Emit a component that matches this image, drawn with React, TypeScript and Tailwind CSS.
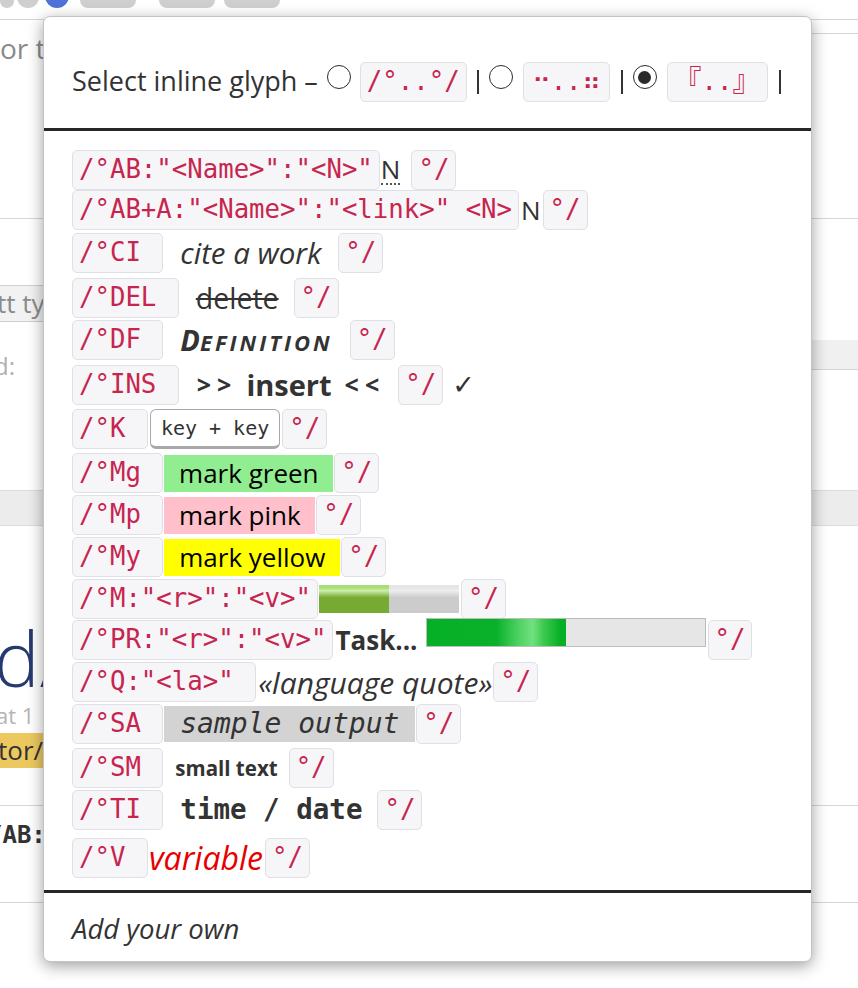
import React from "react";

const MONO = "font-['DejaVu_Sans_Mono','Noto_Sans_CJK_JP',monospace]";

function C({ children, className = "" }: { children: React.ReactNode; className?: string }) {
  return (
    <code
      className={`inline-flex shrink-0 items-center h-[40px] px-[6px] rounded-[5px] border border-[#dfdfe6] bg-[#f6f6f9] text-[#c7254e] ${MONO} text-[25.7px] whitespace-pre leading-none ${className}`}
    >
      {children}
    </code>
  );
}

function Radio({ on }: { on?: boolean }) {
  return (
    <span className="inline-flex shrink-0 w-[24px] h-[24px] mb-[9px] rounded-full border-[1.5px] border-[#2b2b2b] items-center justify-center bg-white">
      {on && <span className="w-[13px] h-[13px] rounded-full bg-[#2b2b2b]" />}
    </span>
  );
}

function Row({ children, className = "" }: { children: React.ReactNode; className?: string }) {
  return <div className={`flex items-center h-[40px] whitespace-nowrap ${className}`}>{children}</div>;
}

function Background() {
  return (
    <div className="flex flex-col w-[858px] font-['Open_Sans',sans-serif]">
      <div className="h-[8px] overflow-hidden">
        <div className="flex items-end gap-[3px] -mt-[22px] h-[30px]">
          <span className="w-[14px] h-[30px] rounded-b-full bg-[#cfcfcf]" />
          <span className="w-[22px] h-[30px] rounded-full bg-[#cfcfcf]" />
          <span className="w-[24px] h-[30px] rounded-full bg-[#4f72d9] ml-[3px]" />
          <span className="w-[56px] h-[30px] rounded-[8px] bg-[#cfcfcf] ml-[8px]" />
          <span className="w-[56px] h-[30px] rounded-[8px] bg-[#cfcfcf] ml-[20px]" />
          <span className="w-[56px] h-[30px] rounded-[8px] bg-[#cfcfcf] ml-[6px]" />
        </div>
      </div>
      <div className="h-[11px]" />
      <div className="h-[1px] bg-[#d6d6d6]" />
      <div className="h-[13px]" />
      <div className="h-[1px] bg-[#d6d6d6] ml-[800px]" />
      <div className="h-[28px] flex items-center text-[28px] text-[#8a8a8a] leading-none">or type here</div>
      <div className="h-[156px]" />
      <div className="h-[1px] bg-[#d6d6d6]" />
      <div className="h-[66px]" />
      <div className="h-[37px] w-[120px] -ml-[24px] bg-[#f2f2f2] border border-[#cfcfcf] flex items-center pl-[20px] text-[26px] text-[#8a8a8a]">
        tt ty
      </div>
      <div className="h-[18px]" />
      <div className="h-[44px] flex items-start justify-between">
        <span className="mt-[12px] text-[24px] leading-[28px] text-[#b0b0b0] -ml-[12px]">ld:</span>
        <span className="w-[58px] h-[30px] bg-[#f0f0f0] border-b border-[#d6d6d6]" />
      </div>
      <div className="h-[106px]" />
      <div className="h-[36px] bg-[#ececec] border-t border-b border-[#dcdcdc]" />
      <div className="h-[99px]" />
      <div className="h-[66px] flex items-center text-[76px] text-[#253a6e] font-light leading-none -ml-[46px] whitespace-nowrap">ad/</div>
      <div className="h-[10px]" />
      <div className="h-[28px] flex items-center text-[22px] text-[#b5b5b5] -ml-[4px]">at 1</div>
      <div className="h-[4px]" />
      <div className="h-[35px] w-[60px] bg-[#ecc960] flex items-center text-[26px] text-[#333] -ml-[2px]">tor/l</div>
      <div className="h-[38px] border-b border-[#d6d6d6]" />
      <div className={`h-[58px] flex items-center text-[24px] font-bold text-[#333] ${MONO} -ml-[12px]`}>/AB:</div>
      <div className="h-[39px] border-b border-[#d6d6d6]" />
    </div>
  );
}

export default function App() {
  return (
    <div className="relative w-[858px] h-[988px] overflow-hidden bg-white">
      <Background />
      <div className="absolute left-[43px] top-[16px] w-[769px] h-[946px] flex flex-col bg-white border border-[#c4c4c4] rounded-[7px] shadow-[0_4px_16px_rgba(0,0,0,0.38)] font-['Open_Sans',sans-serif] text-[26px] text-[#333] overflow-hidden">
        {/* header */}
        <div className="h-[111px] pt-[18px] pl-[28px] flex items-center whitespace-nowrap">
          <span className="text-[27px]">Select inline glyph –</span>
          <span className="ml-[9px]" />
          <Radio />
          <C className="ml-[9px]">/°..°/</C>
          <span className="ml-[10px] w-[2px] h-[24px] bg-[#333]" />
          <span className="ml-[10px]" />
          <Radio />
          <C className="ml-[10px] px-[8px]">⠒..⠶</C>
          <span className="ml-[11px] w-[2px] h-[24px] bg-[#333]" />
          <span className="ml-[10px]" />
          <Radio on />
          <C className="ml-[10px] px-[5px]">
            <span className="text-[28px]">『</span>..<span className="text-[28px]">』</span>
          </C>
          <span className="ml-[11px] w-[2px] h-[24px] bg-[#333]" />
        </div>
        <div className="h-[3px] bg-[#262626]" />

        {/* rows */}
        <div className="pt-[19px] pb-[12px] pl-[28px] flex flex-col">
          <Row>
            <C>{'/°AB:"<Name>":"<N>"'}</C>
            <abbr className="ml-[1px] no-underline border-b-[2px] border-dotted border-[#555] leading-[28px]">N</abbr>
            <C className="ml-[11px]">°/</C>
          </Row>
          <Row>
            <C>{'/°AB+A:"<Name>":"<link>" <N>'}</C>
            <span className="ml-[2px]">N</span>
            <C className="ml-[2px]">°/</C>
          </Row>
          <Row className="mt-[3px]">
            <C>{"/°CI "}</C>
            <cite className="ml-[17px] italic text-[29.5px]">cite a work</cite>
            <C className="ml-[17px]">°/</C>
          </Row>
          <Row className="mt-[5px]">
            <C>{"/°DEL "}</C>
            <del className="ml-[17px] line-through decoration-[2px] text-[28.5px]">delete</del>
            <C className="ml-[15px]">°/</C>
          </Row>
          <Row className="mt-[2px]">
            <C>{"/°DF "}</C>
            <dfn className="ml-[17px] italic font-bold flex items-baseline">
              <span className="text-[29px]">D</span>
              <span className="text-[22px] tracking-[3px]">EFINITION</span>
            </dfn>
            <C className="ml-[17px]">°/</C>
          </Row>
          <Row className="mt-[5px]">
            <C>{"/°INS "}</C>
            <ins className="ml-[18px] no-underline font-bold flex items-center">
              <span className="text-[25px] tracking-[6px]">&gt;&gt;</span>
              <span className="ml-[9px] text-[29px]">insert</span>
              <span className="ml-[13px] text-[25px] tracking-[6px]">&lt;&lt;</span>
            </ins>
            <C className="ml-[13px]">°/</C>
            <span className="ml-[9px] font-['DejaVu_Sans',sans-serif] text-[27px]">✓</span>
          </Row>
          <Row className="mt-[4px]">
            <C>{"/°K "}</C>
            <kbd className={`ml-[2px] h-[40px] px-[10px] inline-flex items-center rounded-[6px] border border-[#a8a8a8] border-b-[3px] bg-white text-[20px] text-[#333] ${MONO} whitespace-pre`}>
              key + key
            </kbd>
            <C className="ml-[2px]">°/</C>
          </Row>
          <Row className="mt-[4px]">
            <C>{"/°Mg "}</C>
            <mark className="ml-[1px] w-[169px] h-[37px] flex items-center justify-center bg-[#90ee90] text-black">mark green</mark>
            <C className="ml-[1px]">°/</C>
          </Row>
          <Row className="mt-[2px]">
            <C>{"/°Mp "}</C>
            <mark className="ml-[1px] w-[151px] h-[37px] flex items-center justify-center bg-[#ffc0cb] text-black">mark pink</mark>
            <C className="ml-[1px]">°/</C>
          </Row>
          <Row className="mt-[2px]">
            <C>{"/°My "}</C>
            <mark className="ml-[1px] w-[176px] h-[37px] flex items-center justify-center bg-[#ffff00] text-black">mark yellow</mark>
            <C className="ml-[1px]">°/</C>
          </Row>
          <Row className="mt-[2px]">
            <C>{'/°M:"<r>":"<v>"'}</C>
            <div className="ml-[1px] w-[140px] h-[28px] bg-[linear-gradient(#e6e6e6,#e6e6e6,#eeeeee_20%,#cccccc_45%,#cccccc_55%)]">
              <div className="w-[70px] h-full bg-[linear-gradient(#aadd77,#aadd77,#cceeaa_20%,#77aa33_45%,#77aa33_55%)]" />
            </div>
            <C className="ml-[2px]">°/</C>
          </Row>
          <Row className="mt-[1px]">
            <C>{'/°PR:"<r>":"<v>"'}</C>
            <span className="ml-[2px] font-bold">Task...</span>
            <div className="ml-[8px] mb-[16px] w-[280px] h-[29px] border border-[#bcbcbc] bg-[#e6e6e6]">
              <div className="w-[139px] h-full bg-[linear-gradient(90deg,#06b025_0%,#09b12a_50%,#4fd262_66%,#72e07f_76%,#3cc94f_84%,#06b025_96%)]" />
            </div>
            <C className="ml-[2px]">°/</C>
          </Row>
          <Row className="mt-[2px]">
            <C>{'/°Q:"<la>" '}</C>
            <q className="ml-[2px] italic text-[30px] before:content-['«'] after:content-['»']">language quote</q>
            <C className="ml-[1px]">°/</C>
          </Row>
          <Row className="mt-[2px]">
            <C>{"/°SA "}</C>
            <samp className={`ml-[1px] w-[251px] h-[36px] flex items-center justify-center bg-[#d3d3d3] italic text-[28px] ${MONO} text-[#333]`}>
              sample output
            </samp>
            <C className="ml-[1px]">°/</C>
          </Row>
          <Row className="mt-[4px]">
            <C>{"/°SM "}</C>
            <small className="ml-[12px] text-[20.5px] font-bold">small text</small>
            <C className="ml-[11px]">°/</C>
          </Row>
          <Row className="mt-[2px]">
            <C>{"/°TI "}</C>
            <time className={`ml-[17px] text-[27.5px] font-bold ${MONO} whitespace-pre`}>time / date</time>
            <C className="ml-[15px]">°/</C>
          </Row>
          <Row className="mt-[8px]">
            <C>{"/°V "}</C>
            <var className="ml-[1px] italic text-[32px] text-[#e60000]">variable</var>
            <C className="ml-[2px]">°/</C>
          </Row>
        </div>
        <div className="h-[3px] bg-[#262626]" />
        <div className="flex-1 pl-[28px] pt-[4px] flex items-center italic text-[27.5px]">Add your own</div>
      </div>
    </div>
  );
}
